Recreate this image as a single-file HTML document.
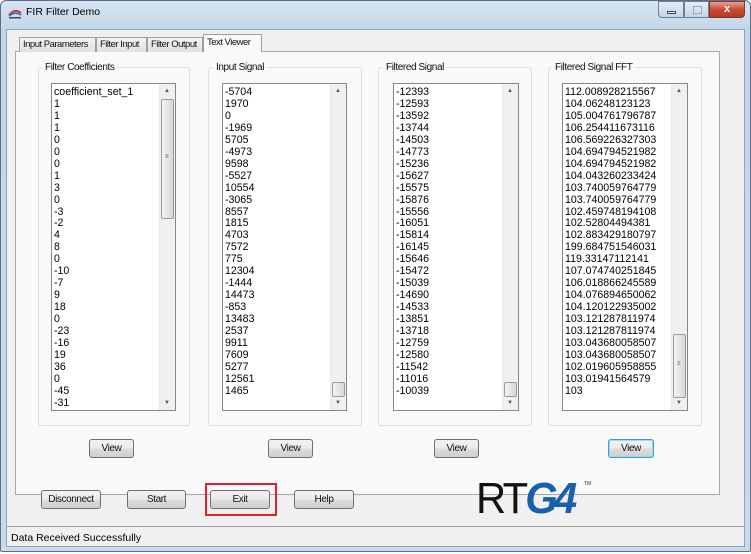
<!DOCTYPE html>
<html><head><meta charset="utf-8"><style>
*{margin:0;padding:0;box-sizing:border-box}
body{width:751px;height:554px;overflow:hidden;background:#fff;font-family:"Liberation Sans",sans-serif;position:relative}
.a{position:absolute}
.win{left:0;top:0;width:751px;height:552px;border:1px solid #5a6f8a;border-radius:6px 6px 2px 2px;background:linear-gradient(#d6e4f1,#c3d6ea 30px,#c8daec);}
.client{left:6px;top:29px;width:739px;height:518px;background:#f0f0f0;border:1px solid #8ea3bc}
.tab{top:37px;height:15px;border:1px solid #a0a0a0;border-bottom:none;background:linear-gradient(#f4f4f4,#e0e0e0);font-size:9.5px;letter-spacing:-0.5px;color:#111;padding:1px 3px;white-space:nowrap;overflow:hidden}
.panel{left:15px;top:51px;width:705px;height:444px;border:1px solid #a9a9a9;background:#f9f9f9}
.grp{top:67px;height:359px;border:1px solid #dcdcdc;border-radius:3px}
.gl{font-size:10px;letter-spacing:-0.4px;background:#f9f9f9;padding:0 3px;color:#111;top:62px}
.lb{top:83px;height:328px;border:1px solid #828790;background:#fff;overflow:hidden}
.lb .t{position:absolute;left:2px;top:3px;font-size:10.6px;line-height:11.95px;color:#000;white-space:pre}
.sb{position:absolute;right:0;top:0;width:16px;height:100%;background:#f0f0f0;border-left:1px solid #e8e8e8}
.th{position:absolute;left:1px;width:13px;border:1px solid #9a9a9a;border-radius:2px;background:linear-gradient(90deg,#f3f3f3,#d8d8d8)}
.ar{position:absolute;left:4px;font-size:6px;color:#555}
.btn{height:19px;border:1px solid #707070;border-radius:3px;background:linear-gradient(#f2f2f2,#ebebeb 50%,#dddddd 51%,#cfcfcf);font-size:10px;letter-spacing:-0.4px;text-align:center;line-height:17px;color:#111}
</style></head><body>
<div class="a win"></div>
<div class="a" style="left:8px;top:6px;width:14px;height:10px">
<svg width="14" height="10"><path d="M1 6 Q7 -1 13 4" stroke="#d04020" stroke-width="2" fill="none"/><path d="M1 7 Q7 2 13 6" stroke="#2070c0" stroke-width="1.5" fill="none"/><rect x="1" y="8" width="12" height="1.5" fill="#446"/></svg></div>
<div class="a" style="left:26px;top:6px;font-size:10.5px;color:#000">FIR Filter Demo</div>
<div class="a" style="left:658px;top:1px;width:26px;height:17px;border:1px solid #6d7f98;border-radius:0 0 0 4px;background:linear-gradient(#e4edf7,#c5d5e8)"><div class="a" style="left:8px;top:9px;width:9px;height:3px;background:#fff;border:1px solid #445"></div></div>
<div class="a" style="left:684px;top:1px;width:25px;height:17px;border:1px solid #6d7f98;background:linear-gradient(#e4edf7,#c5d5e8)"><div class="a" style="left:8px;top:4px;width:9px;height:8px;border:1px solid #9ab"></div></div>
<div class="a" style="left:709px;top:1px;width:36px;height:17px;border:1px solid #7a3a30;border-radius:0 0 4px 0;background:linear-gradient(#e8a08f,#c74a35 50%,#b83a20);color:#fff;font-size:11px;font-weight:bold;text-align:center;line-height:15px">x</div>
<div class="a client"></div>
<div class="a panel"></div>
<div class="a tab" style="left:19px;width:77px">Input Parameters</div>
<div class="a tab" style="left:96px;width:51px">Filter Input</div>
<div class="a tab" style="left:147px;width:56px">Filter Output</div>
<div class="a tab" style="left:203px;top:34px;height:18px;width:59px;background:#f9f9f9;padding-top:2px">Text Viewer</div>

<div class="a grp" style="left:38px;width:152px"></div><div class="a gl" style="left:42px">Filter Coefficients</div>
<div class="a grp" style="left:208px;width:154px"></div><div class="a gl" style="left:213px">Input Signal</div>
<div class="a grp" style="left:378px;width:154px"></div><div class="a gl" style="left:383px">Filtered Signal</div>
<div class="a grp" style="left:548px;width:154px"></div><div class="a gl" style="left:552px">Filtered Signal FFT</div>

<div class="a lb" style="left:51px;width:125px"><div class="t">coefficient_set_1
1
1
1
0
0
0
1
3
0
-3
-2
4
8
0
-10
-7
9
18
0
-23
-16
19
36
0
-45
-31</div><div class="sb"><span class="ar" style="top:4px">▲</span><div class="th" style="top:15px;height:120px"><span class="ar" style="top:54px;left:3px">≡</span></div><span class="ar" style="bottom:4px">▼</span></div></div>

<div class="a lb" style="left:222px;width:125px"><div class="t">-5704
1970
0
-1969
5705
-4973
9598
-5527
10554
-3065
8557
1815
4703
7572
775
12304
-1444
14473
-853
13483
2537
9911
7609
5277
12561
1465</div><div class="sb"><span class="ar" style="top:4px">▲</span><div class="th" style="top:298px;height:15px"></div><span class="ar" style="bottom:4px">▼</span></div></div>

<div class="a lb" style="left:393px;width:126px"><div class="t">-12393
-12593
-13592
-13744
-14503
-14773
-15236
-15627
-15575
-15876
-15556
-16051
-15814
-16145
-15646
-15472
-15039
-14690
-14533
-13851
-13718
-12759
-12580
-11542
-11016
-10039</div><div class="sb"><span class="ar" style="top:4px">▲</span><div class="th" style="top:298px;height:15px"></div><span class="ar" style="bottom:4px">▼</span></div></div>

<div class="a lb" style="left:562px;width:126px"><div class="t">112.008928215567
104.06248123123
105.004761796787
106.254411673116
106.569226327303
104.694794521982
104.694794521982
104.043260233424
103.740059764779
103.740059764779
102.459748194108
102.52804494381
102.883429180797
199.684751546031
119.33147112141
107.074740251845
106.018866245589
104.076894650062
104.120122935002
103.121287811974
103.121287811974
103.043680058507
103.043680058507
102.019605958855
103.01941564579
103</div><div class="sb"><span class="ar" style="top:4px">▲</span><div class="th" style="top:250px;height:64px"><span class="ar" style="top:26px;left:3px">≡</span></div><span class="ar" style="bottom:4px">▼</span></div></div>

<div class="a btn" style="left:89px;top:439px;width:45px">View</div>
<div class="a btn" style="left:268px;top:439px;width:45px">View</div>
<div class="a btn" style="left:434px;top:439px;width:45px">View</div>
<div class="a btn" style="left:608px;top:439px;width:46px;border-color:#3c9cd0;box-shadow:inset 0 0 0 1px #9fd8f4">View</div>

<div class="a btn" style="left:41px;top:490px;width:60px">Disconnect</div>
<div class="a btn" style="left:127px;top:490px;width:59px">Start</div>
<div class="a" style="left:205px;top:483px;width:72px;height:33px;border:2px solid #e0202a"></div>
<div class="a btn" style="left:210px;top:490px;width:60px">Exit</div>
<div class="a btn" style="left:294px;top:490px;width:60px">Help</div>

<div class="a" style="left:476px;top:475px;font-size:44px;letter-spacing:-3px;color:#111;line-height:48px;transform:scaleX(0.95);transform-origin:left">RT<span style="color:#1a5fae;font-weight:bold;font-style:italic;letter-spacing:-4px">G4</span></div>
<div class="a" style="left:584px;top:481px;font-size:5px;color:#333">TM</div>

<div class="a" style="left:7px;top:526px;width:737px;height:1px;background:#a0a0a0"></div>
<div class="a" style="left:11px;top:532px;font-size:10.5px;color:#000">Data Received Successfully</div>
</body></html>
